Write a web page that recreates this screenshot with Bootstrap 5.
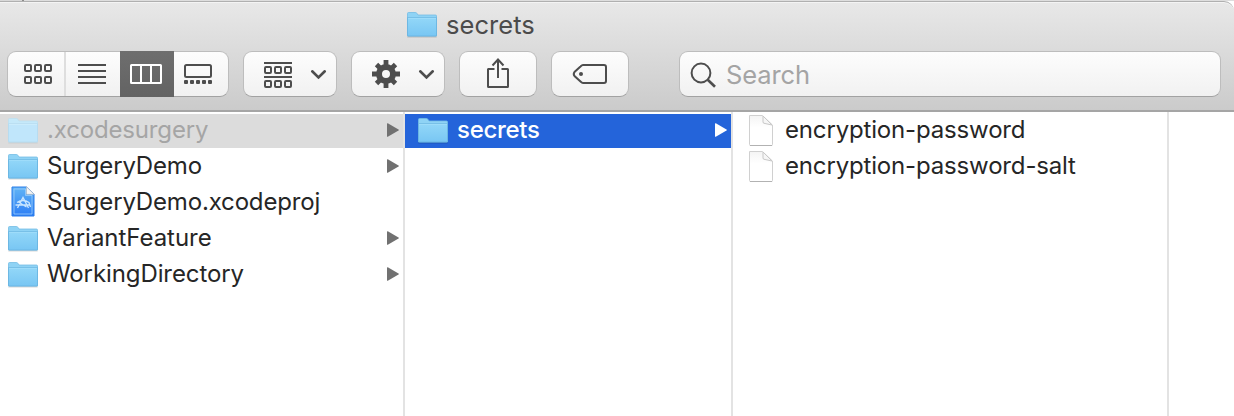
<!DOCTYPE html>
<html lang="en">
<head>
<meta charset="utf-8">
<title>secrets</title>
<link href="https://cdn.jsdelivr.net/npm/bootstrap@5.3.0/dist/css/bootstrap.min.css" rel="stylesheet">
<style>
body{height:416px;overflow:hidden;background:#fff;font-family:Inter,"Liberation Sans",sans-serif;font-size:24px;line-height:34px;color:#262626}
svg{display:block;flex:none}
.top-edge{height:1px;background:linear-gradient(90deg,#d8d8d8 22px,#8c8c8c 22px,#8c8c8c 24px,#dedede 24px)}
.window-head{height:111px;background:linear-gradient(#e8e8e8,#cbcbcb);border-top:1px solid #b0b0b0;border-bottom:2px solid #a5a5a5;border-top-right-radius:10px;box-shadow:inset 0 1px #f4f4f4}
.title-row{height:49px;padding:0 0 3px 407px;color:#4b4b4b;font-size:25.5px;letter-spacing:.05px}
.title-row svg{margin-right:9px}
.tools{padding-left:7px}
.tool{height:46px;background:linear-gradient(#fdfdfd,#f1f1f1);border:1px solid #bdbdbd;border-bottom-color:#a2a2a2;border-radius:9px;padding:0;overflow:hidden}
.tool.views{overflow:visible}
.views button{border:0;padding:0;background:none;height:44px}
.views button:first-child{border-right:2px solid #dedede}
.views .active{height:46px;margin:-1px 0;background:linear-gradient(#6e6e6e,#636363)}
.ln{fill:none;stroke:#4d4d4d;stroke-width:2}
.finder-search{color:#a4a4a4;font-size:25.5px;letter-spacing:-.1px}
.finder-search span{padding-top:2px}
.pane{border-right:2px solid #e3e3e3;padding-top:2px}
.entry{height:34px;margin-bottom:2px;padding:0 0 2px 8px;letter-spacing:-.16px;white-space:nowrap}
.entry .pic{width:30px;margin-right:9px}
.entry .pic[height="26"],.p3 .pic{margin-top:2px}
.dimmed{background:#dcdcdc;color:#a5a5a5}
.chosen{background:#2464da;color:#fff;padding-left:13px;font-weight:500}
.chosen span{letter-spacing:-.3px}
.p1{width:405px}.p2{width:328px}.p3{width:436px}
.p3 .entry{padding-left:14px}.p3 .pic{width:28px;margin-right:10px}
.arrow{margin:0 4px 0 auto;fill:#717171}
.chosen .arrow{fill:#fff}
</style>
</head>
<body>
<svg width="0" height="0" class="position-absolute" aria-hidden="true">
<defs>
<linearGradient id="fg" x2="0" y2="1"><stop offset="0" stop-color="#93d7f8"/><stop offset="1" stop-color="#78c6f3"/></linearGradient>
<linearGradient id="xg" x2="0" y2="1"><stop offset="0" stop-color="#62b5f5"/><stop offset="1" stop-color="#2c7df5"/></linearGradient>
<linearGradient id="dg" x2="0" y2="1"><stop offset="0" stop-color="#f4f4f4"/><stop offset=".4" stop-color="#fff"/></linearGradient>
<symbol id="folder" viewBox="0 0 30 26">
<path d="M.3 24.9H29.7" stroke="#000" stroke-opacity=".2"/>
<path d="M.5 1.5Q.5.5 1.5.5H8.5Q9.5.5 10 1.5L11 3H28.5Q29.5 3 29.5 4V24H.5Z" fill="#8fd3f5" stroke="#74bce4" stroke-width=".8"/>
<path d="M.5 5.5H29.5V23.2Q29.5 24 28.5 24H1.5Q.5 24 .5 23.2Z" fill="url(#fg)" stroke="#67b3df" stroke-width=".8"/>
<path d="M1 6.3H29" stroke="#a6e0fa" stroke-width=".8"/></symbol>
<symbol id="folder-dim" viewBox="0 0 30 26">
<path d="M.3 24.9H29.7" stroke="#000" stroke-opacity=".08"/>
<path d="M.5 1.5Q.5.5 1.5.5H8.5Q9.5.5 10 1.5L11 3H28.5Q29.5 3 29.5 4V24H.5Z" fill="#c5e9fa" stroke="#bcdff0" stroke-width=".8"/>
<path d="M.5 5.5H29.5V23.2Q29.5 24 28.5 24H1.5Q.5 24 .5 23.2Z" fill="#c0e6fb" stroke="#b5dbef" stroke-width=".8"/>
<path d="M1 6.3H29" stroke="#d2effc" stroke-width=".8"/></symbol>
<symbol id="doc" viewBox="0 0 28 34">
<path d="M2.5 1.5H15.5L25.5 11V30.5Q25.5 31.5 24.5 31.5H3.5Q2.5 31.5 2.5 30.5Z" fill="url(#dg)" stroke="#d0d0d0"/>
<path d="M3 31.5H25" stroke="#b2b2b2"/>
<path d="M16 2V8Q16 9.5 18 9.5L25 11Z" fill="#f6f6f6" stroke="#c8c8c8"/></symbol>
<symbol id="chev" viewBox="0 0 16 10"><path d="M1.7 1.8L8 8L14.3 1.8" fill="none" stroke="#4d4d4d" stroke-width="2.6" stroke-linecap="round"/></symbol>
<symbol id="tri" viewBox="0 0 12 14"><path d="M0 .8Q0 0 .8.2L11.5 6.5Q12.3 7 11.5 7.5L.8 13.8Q0 14 0 13.2Z"/></symbol>
</defs></svg>

<div class="top-edge"></div>
<header class="window-head">
<div class="title-row d-flex align-items-center"><svg width="30" height="26"><use href="#folder"/></svg><span id="title">secrets</span></div>
<div class="tools d-flex">
<div class="tool views d-flex" style="width:222px">
<button aria-label="Icons" style="width:58px"><svg width="56" height="44"><g class="ln"><rect x="17" y="13" width="6" height="6" rx="1"/><rect x="27" y="13" width="6" height="6" rx="1"/><rect x="37" y="13" width="6" height="6" rx="1"/><rect x="17" y="25" width="6" height="6" rx="1"/><rect x="27" y="25" width="6" height="6" rx="1"/><rect x="37" y="25" width="6" height="6" rx="1"/></g></svg></button>
<button aria-label="List" style="width:54px"><svg width="54" height="44"><path class="ln" d="M12 13H40M12 19H40M12 25H40M12 31H40"/></svg></button>
<button class="active" aria-label="Columns" style="width:54px"><svg width="54" height="46"><path d="M11 14.5Q11 14 11.5 14H40.5Q41 14 41 14.5V31.5Q41 32 40.5 32H11.5Q11 32 11 31.5ZM21 14V32M31 14V32" fill="none" stroke="#fff" stroke-width="2" stroke-linejoin="round"/></svg></button>
<button aria-label="Gallery" style="width:54px"><svg width="54" height="44"><rect class="ln" x="11" y="13" width="26" height="12" rx="1.5"/><g fill="#4d4d4d"><rect x="10" y="28" width="4" height="4" rx="1"/><rect x="16" y="28" width="4" height="4" rx="1"/><rect x="22" y="28" width="4" height="4" rx="1"/><rect x="28" y="28" width="4" height="4" rx="1"/><rect x="34" y="28" width="4" height="4" rx="1"/></g></svg></button>
</div>
<button class="tool" aria-label="Group" style="width:94px;margin-left:14px"><svg width="92" height="44"><g class="ln"><path d="M20 11H48M20 25H48"/><rect x="21" y="15" width="6" height="6" rx="1"/><rect x="31" y="15" width="6" height="6" rx="1"/><rect x="41" y="15" width="6" height="6" rx="1"/><rect x="21" y="29" width="6" height="6" rx="1"/><rect x="31" y="29" width="6" height="6" rx="1"/><rect x="41" y="29" width="6" height="6" rx="1"/></g><use href="#chev" x="66.5" y="17.5" width="16" height="10"/></svg></button>
<button class="tool" aria-label="Action" style="width:94px;margin-left:14px"><svg width="92" height="44"><g transform="translate(34 22)"><circle r="7" fill="none" stroke="#4d4d4d" stroke-width="6"/><path d="M0-14V-8M0 14V8M-14 0H-8M14 0H8M-9.5-9.5L-6-6M9.5-9.5L6-6M-9.5 9.5L-6 6M9.5 9.5L6 6" stroke="#4d4d4d" stroke-width="4.8"/></g><use href="#chev" x="66.5" y="17.5" width="16" height="10"/></svg></button>
<button class="tool" aria-label="Share" style="width:78px;margin-left:14px"><svg width="76" height="44"><path class="ln" d="M34.5 17H28.2Q28 17 28 17.5V34.5Q28 35 28.5 35H47.5Q48 35 48 34.5V17.5Q48 17 47.5 17H41.5M38 26V7.5M32.5 13.5L38 7.5L43.5 13.5"/></svg></button>
<button class="tool" aria-label="Tags" style="width:78px;margin-left:14px"><svg width="76" height="44"><path class="ln" d="M31 13H52Q54 13 54 15V29Q54 31 52 31H31Q30 31 28.5 29.5L22.5 24Q21 22 22.5 20L28.5 14.5Q30 13 31 13Z"/><circle cx="29" cy="22" r="2" fill="#4d4d4d"/></svg></button>
<div class="tool finder-search d-flex align-items-center" style="width:542px;margin-left:50px"><svg width="46" height="44"><circle cx="21" cy="21" r="9.4" fill="none" stroke="#4d4d4d" stroke-width="2"/><path d="M27.7 27.7L35 34.8" stroke="#4d4d4d" stroke-width="2.6"/></svg><span id="search">Search</span></div>
</div>
</header>
<main class="d-flex" style="height:304px">
<section class="pane p1">
<div class="entry dimmed d-flex align-items-center"><svg class="pic" height="26"><use href="#folder-dim"/></svg><span>.xcodesurgery</span><svg class="arrow" width="12" height="14"><use href="#tri"/></svg></div>
<div class="entry d-flex align-items-center"><svg class="pic" height="26"><use href="#folder"/></svg><span>SurgeryDemo</span><svg class="arrow" width="12" height="14"><use href="#tri"/></svg></div>
<div class="entry d-flex align-items-center"><svg class="pic" height="32" viewBox="0 0 30 32"><path d="M4 1H18.5L26 8V30H4Z" fill="url(#xg)" stroke="#2b7de9"/><path d="M6 3H17.5V9.5H24V28H6Z" fill="none" stroke="#9dcefb" stroke-width=".8"/><path d="M18.5.8V8.3H26.2Z" fill="#f4f4f4" stroke="#bbb" stroke-width=".6"/><path d="M9.5 22L15 11.5L20.5 22M7.5 19H22.5M9 16.5Q15 12.5 21 16.5L22.5 21M10.5 16L18.5 21" fill="none" stroke="#c9e6ff" stroke-width="1.3"/></svg><span>SurgeryDemo.xcodeproj</span></div>
<div class="entry d-flex align-items-center"><svg class="pic" height="26"><use href="#folder"/></svg><span style="letter-spacing:-.04px">VariantFeature</span><svg class="arrow" width="12" height="14"><use href="#tri"/></svg></div>
<div class="entry d-flex align-items-center"><svg class="pic" height="26"><use href="#folder"/></svg><span style="letter-spacing:-.1px">WorkingDirectory</span><svg class="arrow" width="12" height="14"><use href="#tri"/></svg></div>
</section>
<section class="pane p2">
<div class="entry chosen d-flex align-items-center"><svg class="pic" height="26"><use href="#folder"/></svg><span>secrets</span><svg class="arrow" width="12" height="14"><use href="#tri"/></svg></div>
</section>
<section class="pane p3">
<div class="entry d-flex align-items-center"><svg class="pic" height="34"><use href="#doc"/></svg><span>encryption-password</span></div>
<div class="entry d-flex align-items-center"><svg class="pic" height="34"><use href="#doc"/></svg><span>encryption-password-salt</span></div>
</section>
</main>
<script src="https://cdn.jsdelivr.net/npm/bootstrap@5.3.0/dist/js/bootstrap.bundle.min.js"></script>
</body>
</html>
